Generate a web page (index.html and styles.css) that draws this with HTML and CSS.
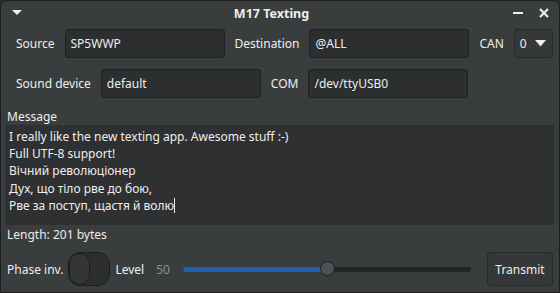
FILE: index.html
```html
<!DOCTYPE html>
<html lang="en">
<head>
    <meta charset="UTF-8">
    <title>M17 Texting</title>
    <link rel="stylesheet" href="styles.css">
</head>
<body>
<div class="window">
    <header class="titlebar">
        <span class="menu-btn"><svg width="12" height="8" viewBox="0 0 12 8"><path d="M1 1 L11 1 L6 6 Z" fill="#eeeeec"/></svg></span>
        <h1 class="title">M17 Texting</h1>
        <span class="win-btns">
            <svg width="12" height="12" viewBox="0 0 12 12"><rect x="1" y="5" width="10" height="2" fill="#eeeeec"/></svg>
            <svg width="12" height="12" viewBox="0 0 12 12"><path d="M2 2 L10 10 M10 2 L2 10" stroke="#eeeeec" stroke-width="2.2"/></svg>
        </span>
    </header>

    <section class="fields">
        <div class="row">
            <label>Source</label>
            <div class="input">SP5WWP</div>
            <label>Destination</label>
            <div class="input">@ALL</div>
            <label>CAN</label>
            <div class="combo">0 <svg width="11" height="7" viewBox="0 0 11 7"><path d="M0 0 L11 0 L5.5 6.5 Z" fill="#eeeeec"/></svg></div>
        </div>
        <div class="row">
            <label>Sound device</label>
            <div class="input">default</div>
            <label>COM</label>
            <div class="input">/dev/ttyUSB0</div>
        </div>
    </section>

    <section class="message">
        <div class="caption">Message</div>
        <div class="textbox">I really like the new texting app. Awesome stuff :-)<br>Full UTF-8 support!<br>Вічний революціонер<br>Дух, що тіло рве до бою,<br>Рве за поступ, щастя й волю<span class="caret"></span></div>
        <div class="caption">Length: 201 bytes</div>
    </section>

    <section class="controls">
        <label>Phase inv.</label>
        <div class="switch"><div class="knob"></div></div>
        <label>Level</label>
        <span class="value">50</span>
        <div class="slider">
            <div class="fill" style="width: 50%;"></div>
            <div class="handle" style="left: 50%;"></div>
        </div>
        <button class="btn">Transmit</button>
    </section>
</div>
</body>
</html>
```

FILE: styles.css
```css
body {
    margin: 0;
    padding: 0;
    background-color: #2a2c2d;
    font-family: "Noto Sans", "DejaVu Sans", sans-serif;
    font-size: 12px;
    color: #eeeeec;
}
.window {
    width: 560px;
    height: 293px;
    box-sizing: border-box;
    border: 1px solid #1c1d1e;
    border-radius: 7px 7px 0 0;
    background-color: #3a3d3e;
    overflow: hidden;
}
.titlebar {
    height: 25px;
    display: flex;
    align-items: center;
    padding: 0 9px 0 9px;
}
.menu-btn {
    display: flex;
    margin-left: 1px;
    margin-top: -1px;
}
.title {
    flex: 1;
    margin: 0;
    text-align: center;
    font-size: 12.5px;
    font-weight: bold;
    padding-left: 8px;
}
.win-btns {
    display: flex;
    gap: 14px;
    margin-top: -2px;
}
.fields {
    padding: 3px 6px 0 15px;
    display: flex;
    flex-direction: column;
    gap: 11px;
}
.row {
    display: flex;
    align-items: center;
    gap: 10px;
    height: 29px;
}
.input {
    width: 160px;
    height: 29px;
    box-sizing: border-box;
    background-color: #2d2e30;
    border: 1px solid #1f2021;
    border-radius: 3px;
    padding: 0 5px;
    line-height: 27px;
}
.combo {
    width: 39px;
    height: 29px;
    box-sizing: border-box;
    background-color: #353738;
    border: 1px solid #27292a;
    border-radius: 3px;
    padding: 0 6px 0 5px;
    display: flex;
    align-items: center;
    justify-content: space-between;
}
.message {
    padding: 10px 5px 0 4px;
}
.caption {
    padding-left: 2px;
    line-height: 17px;
}
.textbox {
    margin: 0 0 1px 0;
    height: 100px;
    box-sizing: border-box;
    background-color: #2f3032;
    padding: 3px 4px;
    line-height: 17.2px;
}
.caret {
    display: inline-block;
    width: 1px;
    height: 15px;
    background-color: #eeeeec;
    vertical-align: -3px;
}
.controls {
    display: flex;
    align-items: center;
    padding: 9px 6px 0 6px;
    height: 34px;
}
.switch {
    width: 42px;
    height: 34px;
    box-sizing: border-box;
    background-color: #2c2d2f;
    border: 1px solid #1d1e1f;
    border-radius: 12px;
    margin: 0 5px 0 5px;
}
.knob {
    width: 21px;
    height: 32px;
    box-sizing: border-box;
    background-color: #333537;
    border: 1px solid #1d1e1f;
    border-radius: 11px;
}
.value {
    color: #8b8e90;
    margin-left: 12px;
}
.slider {
    position: relative;
    width: 288px;
    height: 5px;
    background-color: #232425;
    border-radius: 3px;
    margin-left: 13px;
}
.fill {
    height: 5px;
    background-color: #1d60b5;
    border-radius: 3px 0 0 3px;
}
.handle {
    position: absolute;
    top: -6px;
    width: 15px;
    height: 15px;
    box-sizing: border-box;
    margin-left: -7px;
    background-color: #4d5154;
    border: 1px solid #1d1e1f;
    border-radius: 50%;
}
.btn {
    margin-left: auto;
    width: 66px;
    height: 34px;
    background-color: #353738;
    border: 1px solid #27292a;
    border-radius: 3px;
    color: #eeeeec;
    font-family: inherit;
    font-size: 12px;
    padding: 0;
}
```
